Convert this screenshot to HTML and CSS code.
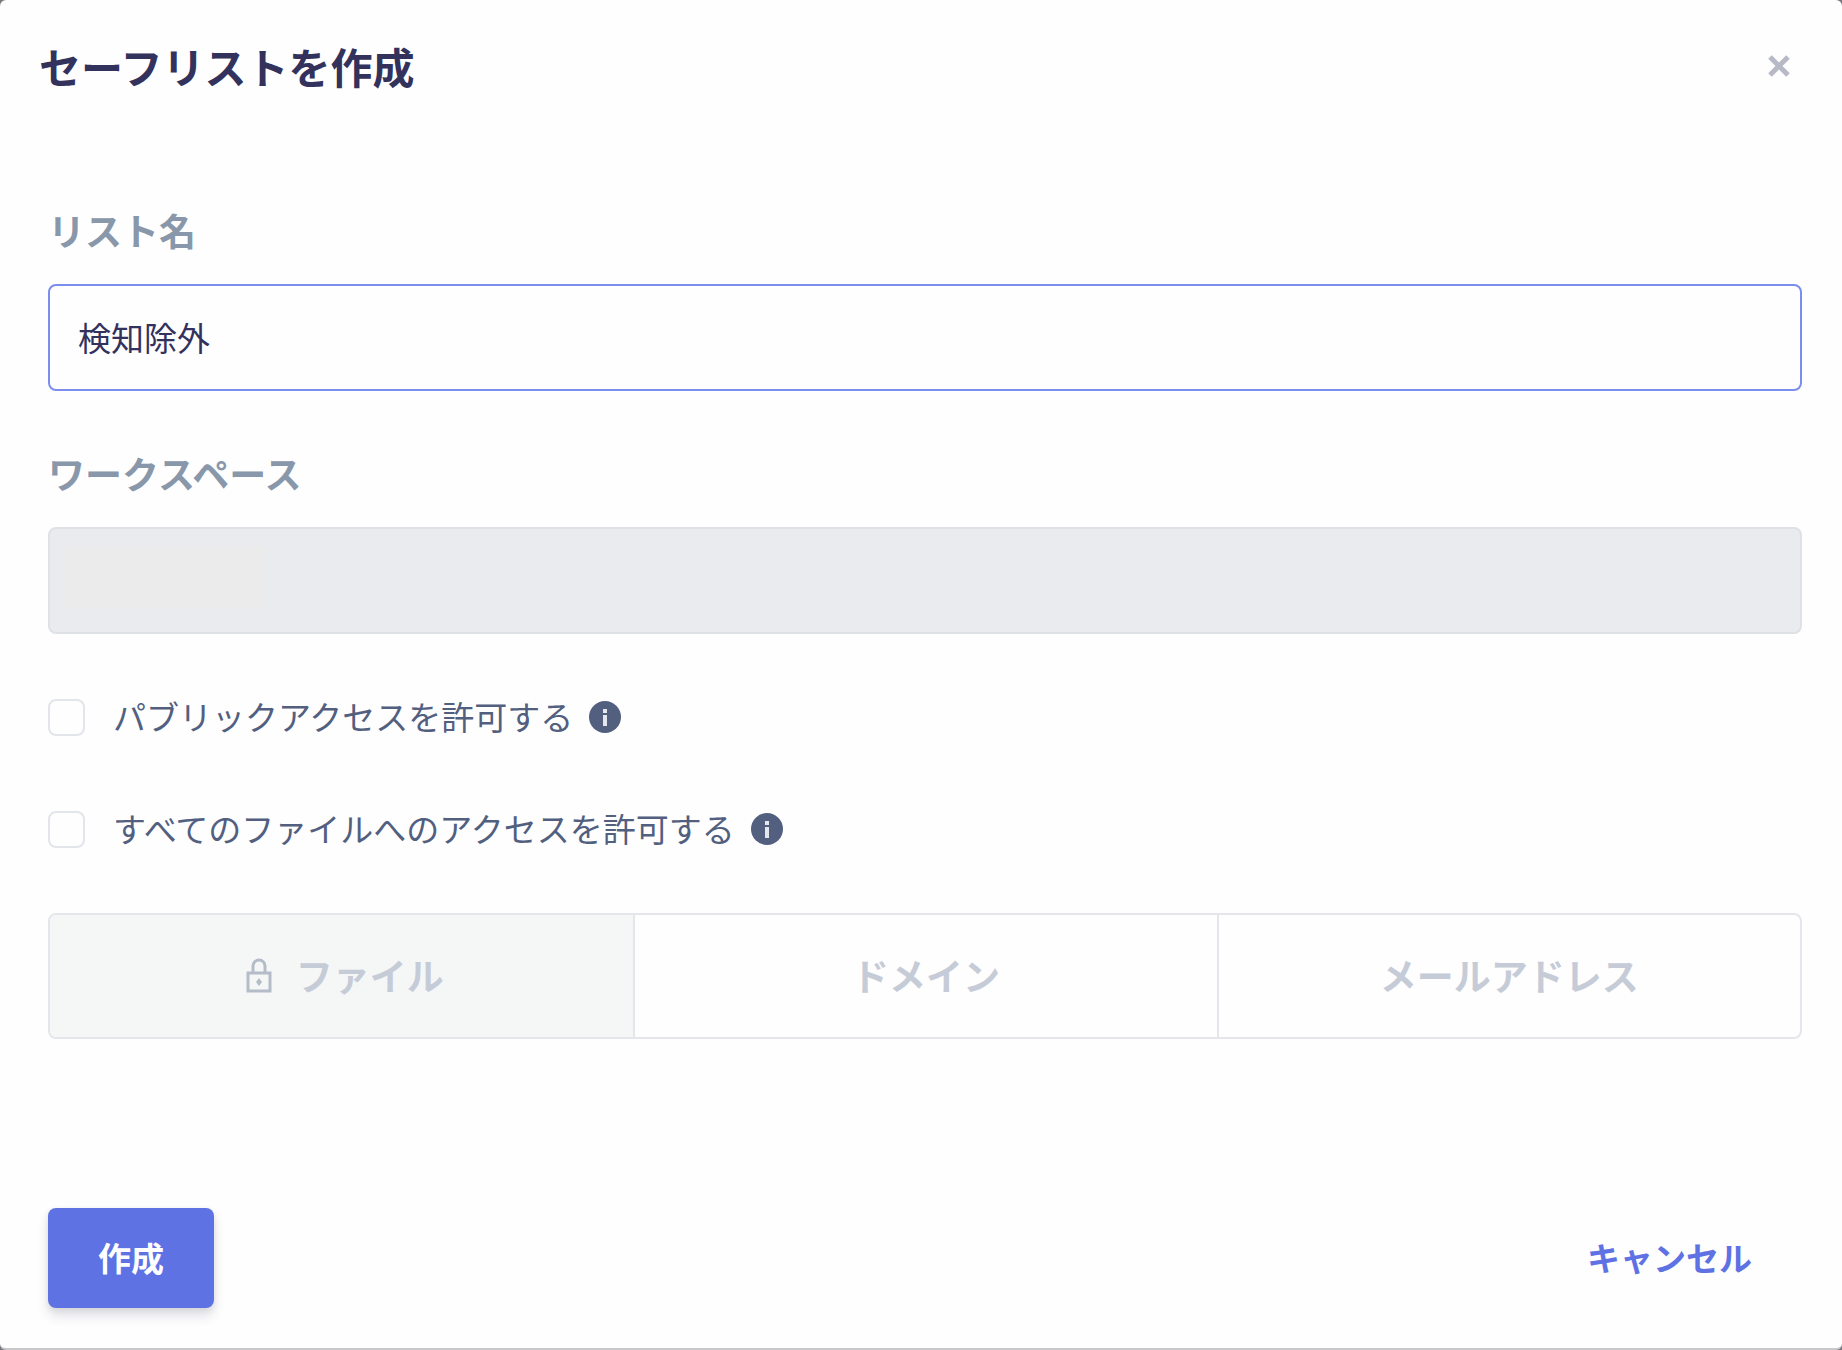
FILE: index.html
```html
<!DOCTYPE html>
<html lang="ja">
<head>
  <meta charset="UTF-8" />
  <title>セーフリストを作成</title>
  <meta name="viewport" content="width=device-width, initial-scale=1" />
  <link rel="stylesheet" href="styles.css">
</head>
<body>
  <form class="modal">
    <header class="modal-header">
      <h1>セーフリストを作成</h1>
      <button type="button" class="close" aria-label="閉じる">
        <svg width="22" height="22" viewBox="0 0 22 22" fill="none" stroke="#b7b9c6" stroke-width="5">
          <path d="M2 2L20 20M20 2L2 20" />
        </svg>
      </button>
    </header>

    <main class="modal-body">
      <div class="field">
        <label for="listName">リスト名</label>
        <input type="text" id="listName" class="text-input active" value="検知除外" />
      </div>

      <div class="field">
        <label for="workspace">ワークスペース</label>
        <input type="text" id="workspace" class="text-input masked" disabled />
      </div>

      <div class="check-row">
        <input type="checkbox" id="publicAccess" />
        <label for="publicAccess">パブリックアクセスを許可する</label>
        <svg class="info" viewBox="0 0 32 32">
          <circle cx="16" cy="16" r="16" fill="#525f7f" />
          <path d="M14 8h4v4h-4zM14 14h4v11h-4z" fill="#e4e7ee" />
        </svg>
      </div>

      <div class="check-row">
        <input type="checkbox" id="allFiles" />
        <label for="allFiles">すべてのファイルへのアクセスを許可する</label>
        <svg class="info" viewBox="0 0 32 32">
          <circle cx="16" cy="16" r="16" fill="#525f7f" />
          <path d="M14 8h4v4h-4zM14 14h4v11h-4z" fill="#e4e7ee" />
        </svg>
      </div>

      <div class="tabs">
        <button type="button" class="tab selected">
          <svg width="26" height="36" viewBox="0 0 26 36" fill="none" stroke="#b4bcc8" stroke-width="3">
            <path d="M2 16h22v18H2z" />
            <path d="M7 16V9a6 6 0 0 1 12 0v7" />
            <path d="M13 21l3 4-3 4-3-4z" fill="#b4bcc8" stroke="none" />
          </svg>
          ファイル
        </button>
        <button type="button" class="tab">ドメイン</button>
        <button type="button" class="tab">メールアドレス</button>
      </div>
    </main>

    <footer class="modal-footer">
      <button type="submit" class="btn btn-primary">作成</button>
      <button type="button" class="btn btn-link">キャンセル</button>
    </footer>
  </form>
</body>
</html>
```

FILE: styles.css
```css
* {
  box-sizing: border-box;
}
body {
  margin: 0;
  font-family: 'Noto Sans CJK JP', sans-serif;
  background: #77777d;
  color: #32325d;
}
button, input {
  font-family: inherit;
  margin: 0;
}
button {
  border: 0;
  background: none;
  cursor: pointer;
}
.modal {
  display: flex;
  flex-direction: column;
  min-height: 100vh;
  background: #fefefe;
  border-bottom: 2px solid #c8c8cb;
  border-radius: 6px;
}

/* Header */
.modal-header {
  display: flex;
  justify-content: space-between;
  align-items: center;
  padding: 36px 40px 0 39px;
}
h1 {
  margin: 0;
  font-size: 42px;
  line-height: 60px;
  font-weight: 700;
}
.close {
  display: flex;
  padding: 12px;
}

/* Fields */
.modal-body {
  padding: 107px 40px 0 48px;
}
.field {
  margin-bottom: 55px;
}
.field label {
  display: block;
  margin-bottom: 27px;
  font-size: 37px;
  line-height: 54px;
  font-weight: 700;
  color: #8898aa;
}
.text-input {
  display: block;
  width: 100%;
  height: 107px;
  padding: 0 28px 2px;
  border: 2px solid #dee2e6;
  border-radius: 8px;
  background: #fefefe;
  font-size: 33px;
  color: #32325d;
  outline: none;
}
.text-input.active {
  border-color: #7b8eee;
}
.text-input.masked {
  background: #eaebef linear-gradient(#ebebeb, #ebebeb) no-repeat 14px 17px / 202px 62px;
}

/* Checkboxes */
.check-row {
  display: flex;
  align-items: center;
  height: 48px;
  margin-top: 64px;
}
.field + .check-row {
  margin-top: 59px;
}
.check-row input {
  appearance: none;
  width: 37px;
  height: 37px;
  border: 2px solid #e2e5ea;
  border-radius: 8px;
  background: #fefefe;
}
.check-row label {
  margin-left: 28px;
  padding-bottom: 2px;
  font-size: 33px;
  line-height: 46px;
  color: #525f7f;
}
.info {
  width: 32px;
  height: 32px;
  margin-left: 16px;
}

/* Tabs */
.tabs {
  display: grid;
  grid-template-columns: repeat(3, 1fr);
  height: 126px;
  margin-top: 60px;
  border: 2px solid #e4e6eb;
  border-radius: 8px;
  overflow: hidden;
}
.tab {
  display: flex;
  justify-content: center;
  align-items: center;
  gap: 24px;
  padding-bottom: 3px;
  font-size: 37px;
  font-weight: 700;
  color: #c6ccd7;
}
.tab + .tab {
  border-left: 2px solid #e4e6eb;
}
.tab.selected {
  padding-left: 12px;
  background: #f5f7f7;
}

/* Footer */
.modal-footer {
  display: flex;
  justify-content: space-between;
  margin-top: auto;
  padding: 0 40px 40px 48px;
}
.btn {
  height: 100px;
  padding: 0 50px 3px;
  border-radius: 8px;
  font-size: 33px;
  font-weight: 700;
}
.btn-primary {
  background: #5e72e4;
  color: #fff;
  box-shadow: 0 8px 12px rgba(50, 50, 93, 0.14), 0 2px 6px rgba(0, 0, 0, 0.08);
}
.btn-link {
  color: #5e72e4;
}
```
